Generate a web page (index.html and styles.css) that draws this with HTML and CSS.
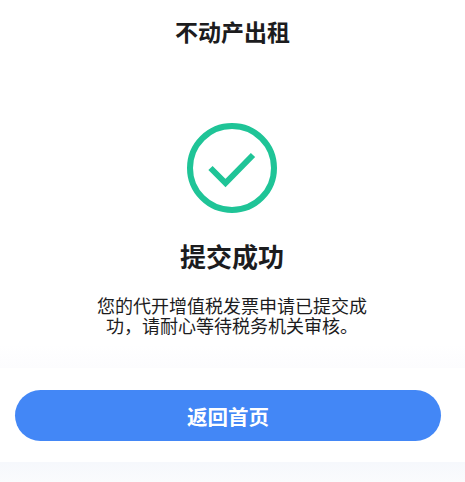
FILE: index.html
```html
<!DOCTYPE html>
<html lang="zh-CN">
<head>
<meta charset="utf-8">
<title>不动产出租</title>
<link rel="stylesheet" href="styles.css">
</head>
<body>
<div class="page">
  <header class="top">不动产出租</header>
  <main class="result">
    <svg class="ok" width="92" height="92" viewBox="0 0 92 92" aria-hidden="true">
      <circle cx="46" cy="46" r="42" fill="none" stroke="#1fc497" stroke-width="6"/>
      <path d="M24.5 46 L39.5 61 L67 33" fill="none" stroke="#1fc497" stroke-width="6"/>
    </svg>
    <h1 class="title">提交成功</h1>
    <p class="desc">您的代开增值税发票申请已提交成功，请耐心等待税务机关审核。</p>
  </main>
  <footer class="bar"><button class="btn">返回首页</button></footer>
</div>
</body>
</html>
```
FILE: styles.css
```css
html, body { margin: 0; height: 100%; }
body {
  background: #fff;
  font-family: "Noto Sans CJK SC", "Liberation Sans", sans-serif;
  color: #1c1c1e;
  overflow: hidden;
}
.page {
  display: flex;
  flex-direction: column;
  height: 482px;
  background: linear-gradient(#fff 0, #fff 345px, #fcfcfe 368px, #f6f8fc 462px, #fafbfd 482px);
}
.top {
  height: 66px;
  line-height: 62px;
  text-align: center;
  font-size: 23px;
  font-weight: 700;
}
.result {
  flex: 1;
  display: flex;
  flex-direction: column;
  align-items: center;
  padding-top: 56px;
}
.ok { display: block; margin-right: 1px; }
.title {
  margin: 23px 0 0;
  font-size: 26px;
  line-height: 38px;
  font-weight: 700;
  margin-right: 1px;
}
.desc {
  margin: 20px 0 0;
  width: 276px;
  font-size: 18px;
  line-height: 20px;
  text-align: center;
  margin-right: 1px;
}
.bar {
  height: 94px;
  box-sizing: border-box;
  margin-bottom: 20px;
  padding: 22px 24px 21px 15px;
  background: #fff;
}
.btn {
  display: block;
  width: 100%;
  height: 51px;
  border: 0;
  border-radius: 26px;
  background: #4387f6;
  color: #fff;
  font: 700 20.5px "Noto Sans CJK SC", sans-serif;
}
```
